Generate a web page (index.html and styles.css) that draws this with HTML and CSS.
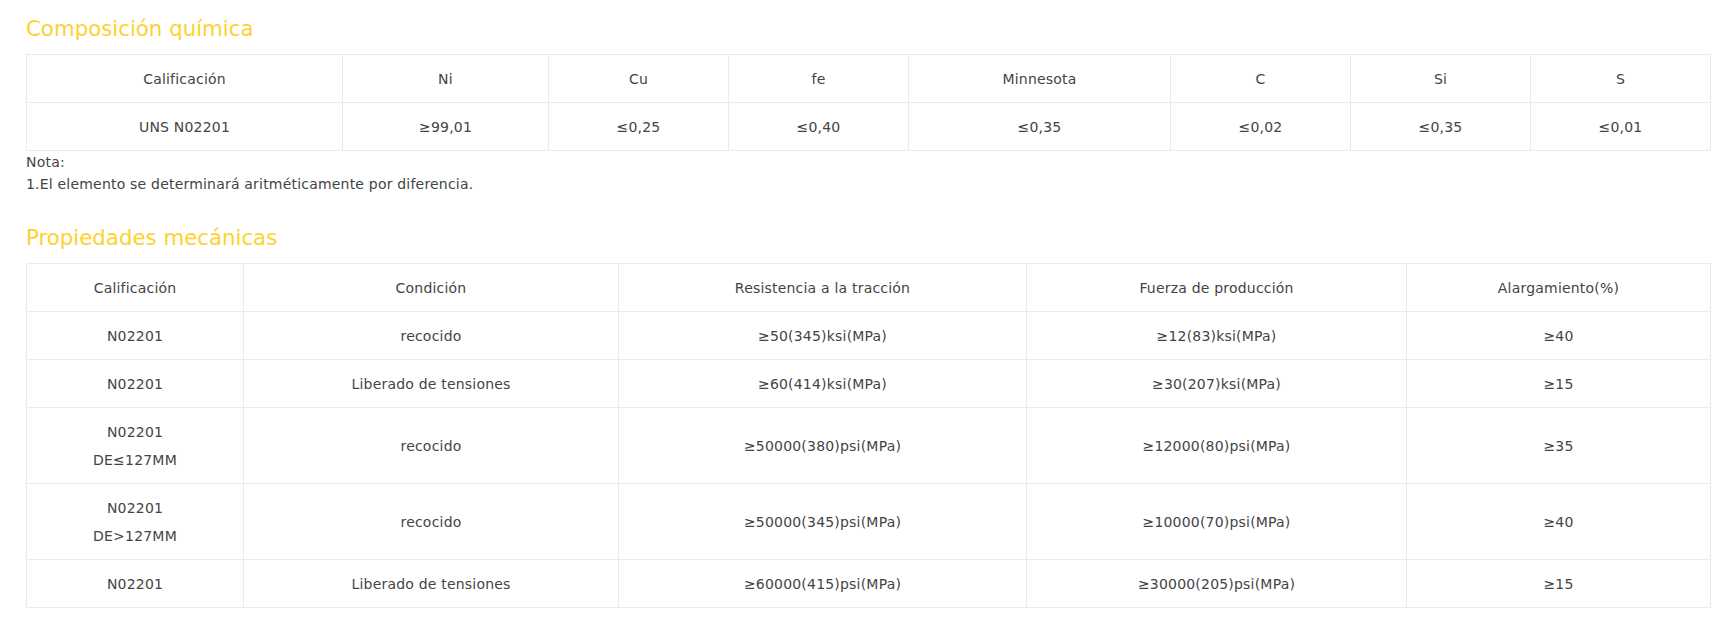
FILE: index.html
```html
<!DOCTYPE html>
<html lang="es">
<head>
<meta charset="utf-8">
<title>UNS N02201</title>
<link rel="stylesheet" href="styles.css">
</head>
<body>
<div class="page">
  <h2 class="section-title">Composición química</h2>
  <table class="spec-table">
    <colgroup>
      <col class="c1-grade"><col class="c1-ni"><col class="c1-std"><col class="c1-std"><col class="c1-mn"><col class="c1-std"><col class="c1-std"><col class="c1-std">
    </colgroup>
    <tr><td>Calificación</td><td>Ni</td><td>Cu</td><td>fe</td><td>Minnesota</td><td>C</td><td>Si</td><td>S</td></tr>
    <tr><td>UNS N02201</td><td>≥99,01</td><td>≤0,25</td><td>≤0,40</td><td>≤0,35</td><td>≤0,02</td><td>≤0,35</td><td>≤0,01</td></tr>
  </table>
  <div class="notes">
    <p>Nota:</p>
    <p>1.El elemento se determinará aritméticamente por diferencia.</p>
  </div>

  <h2 class="section-title second">Propiedades mecánicas</h2>
  <table class="spec-table">
    <colgroup>
      <col class="c2-grade"><col class="c2-cond"><col class="c2-tens"><col class="c2-yield"><col class="c2-elong">
    </colgroup>
    <tr><td>Calificación</td><td>Condición</td><td>Resistencia a la tracción</td><td>Fuerza de producción</td><td>Alargamiento(%)</td></tr>
    <tr><td>N02201</td><td>recocido</td><td>≥50(345)ksi(MPa)</td><td>≥12(83)ksi(MPa)</td><td>≥40</td></tr>
    <tr><td>N02201</td><td>Liberado de tensiones</td><td>≥60(414)ksi(MPa)</td><td>≥30(207)ksi(MPa)</td><td>≥15</td></tr>
    <tr><td>N02201<br>DE≤127MM</td><td>recocido</td><td>≥50000(380)psi(MPa)</td><td>≥12000(80)psi(MPa)</td><td>≥35</td></tr>
    <tr><td>N02201<br>DE&gt;127MM</td><td>recocido</td><td>≥50000(345)psi(MPa)</td><td>≥10000(70)psi(MPa)</td><td>≥40</td></tr>
    <tr><td>N02201</td><td>Liberado de tensiones</td><td>≥60000(415)psi(MPa)</td><td>≥30000(205)psi(MPa)</td><td>≥15</td></tr>
  </table>
</div>
</body>
</html>
```

FILE: styles.css
```css
html, body {
  margin: 0;
  padding: 0;
  background: #ffffff;
}

body {
  font-family: "DejaVu Sans", Verdana, sans-serif;
  font-size: 14px;
  letter-spacing: 0.2px;
  color: #444444;
}

.page {
  padding: 14px 26px 0 26px;
}

.section-title {
  margin: 0 0 10px 0;
  font-size: 21.3px;
  line-height: 30px;
  font-weight: normal;
  letter-spacing: 0;
  color: #fdd22e;
}

.section-title.second {
  margin-top: 28px;
}

.spec-table {
  width: 100%;
  table-layout: fixed;
  border-collapse: collapse;
}

.spec-table td {
  border: 1px solid #ebebeb;
  padding: 9.5px 4px;
  line-height: 28px;
  text-align: center;
  vertical-align: middle;
}

.c1-grade { width: 316px; }
.c1-ni { width: 206px; }
.c1-std { width: 180px; }
.c1-mn { width: 262px; }

.c2-grade { width: 217px; }
.c2-cond { width: 375px; }
.c2-tens { width: 408px; }
.c2-yield { width: 380px; }
.c2-elong { width: 304px; }

.notes p {
  margin: 0;
  line-height: 22px;
}
```
